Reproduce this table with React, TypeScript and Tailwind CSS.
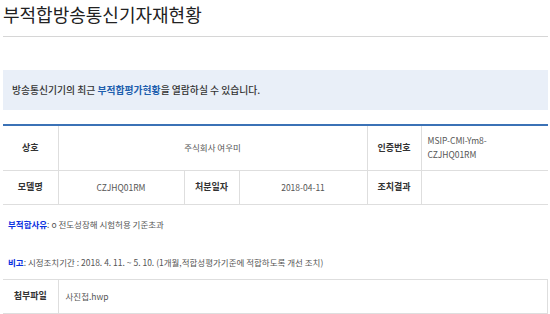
import React from 'react';

const FONT = '"Noto Sans CJK KR", "Noto Sans", sans-serif';

const App: React.FC = () => {
  return (
    <div
      className="w-[550px] h-[314px] bg-white overflow-hidden pl-[3px] pr-[2px] text-[#555]"
      style={{ fontFamily: FONT }}
    >
      {/* Page title */}
      <h1 className="h-[37px] pt-[2px] border-b border-[#d6d6d6] text-[18px] leading-[24px] font-normal text-[#222]">
        부적합방송통신기자재현황
      </h1>

      {/* Info box */}
      <div className="mt-[33px] h-[40px] bg-[#e9eff8] flex items-center pl-[9px] text-[9.8px] font-medium text-[#333]">
        방송통신기기의 최근&nbsp;<span className="text-[#1f5fae] font-bold">부적합평가현황</span>을 열람하실 수 있습니다.
      </div>

      {/* Detail table */}
      <table className="mt-[14px] w-[545px] table-fixed border-collapse border-t-2 border-[#3b72b6] text-[8.5px]">
        <colgroup>
          <col className="w-[55px]" />
          <col className="w-[126px]" />
          <col className="w-[55px]" />
          <col className="w-[128px]" />
          <col className="w-[54px]" />
          <col className="w-[127px]" />
        </colgroup>
        <tbody>
          <tr className="h-[45px] border-b border-[#dedede]">
            <th className="text-[9px] font-bold text-[#333] border-r border-[#dedede]">상호</th>
            <td colSpan={3} className="text-center border-r border-[#dedede]">주식회사 여우미</td>
            <th className="text-[9px] font-bold text-[#333] border-r border-[#dedede]">인증번호</th>
            <td className="pl-[6px] text-left leading-[14px] align-top pt-[7px]">
              MSIP-CMI-Ym8-
              <br />
              CZJHQ01RM
            </td>
          </tr>
          <tr className="h-[34px] border-b border-[#dedede]">
            <th className="text-[9px] font-bold text-[#333] border-r border-[#dedede]">모델명</th>
            <td className="text-center border-r border-[#dedede]">CZJHQ01RM</td>
            <th className="text-[9px] font-bold text-[#333] border-r border-[#dedede]">처분일자</th>
            <td className="text-center border-r border-[#dedede]">2018-04-11</td>
            <th className="text-[9px] font-bold text-[#333] border-r border-[#dedede]">조치결과</th>
            <td></td>
          </tr>
        </tbody>
      </table>

      {/* Reasons */}
      <p className="mt-[12px] pl-[5px] text-[8.5px] leading-[14px]">
        <span className="text-[#0a2fe0] font-bold">부적합사유</span>: o 전도성장해 시험허용 기준초과
      </p>
      <p className="mt-[24px] pl-[5px] text-[8.5px] leading-[14px]">
        <span className="text-[#0a2fe0] font-bold">비고</span>: 시정조치기간 : 2018. 4. 11. ~ 5. 10. (1개월,적합성평가기준에 적합하도록 개선 조치)
      </p>

      {/* Attachment */}
      <table className="mt-[10px] w-[545px] table-fixed border-collapse text-[8.5px]">
        <colgroup>
          <col className="w-[55px]" />
          <col />
        </colgroup>
        <tbody>
          <tr className="h-[34px] border-t border-b border-[#dedede]">
            <th className="text-[9px] font-bold text-[#333] border-r border-[#dedede]">첨부파일</th>
            <td className="pl-[7px] text-left border-r border-[#dedede]">사진첩.hwp</td>
          </tr>
        </tbody>
      </table>
    </div>
  );
};

export default App;
